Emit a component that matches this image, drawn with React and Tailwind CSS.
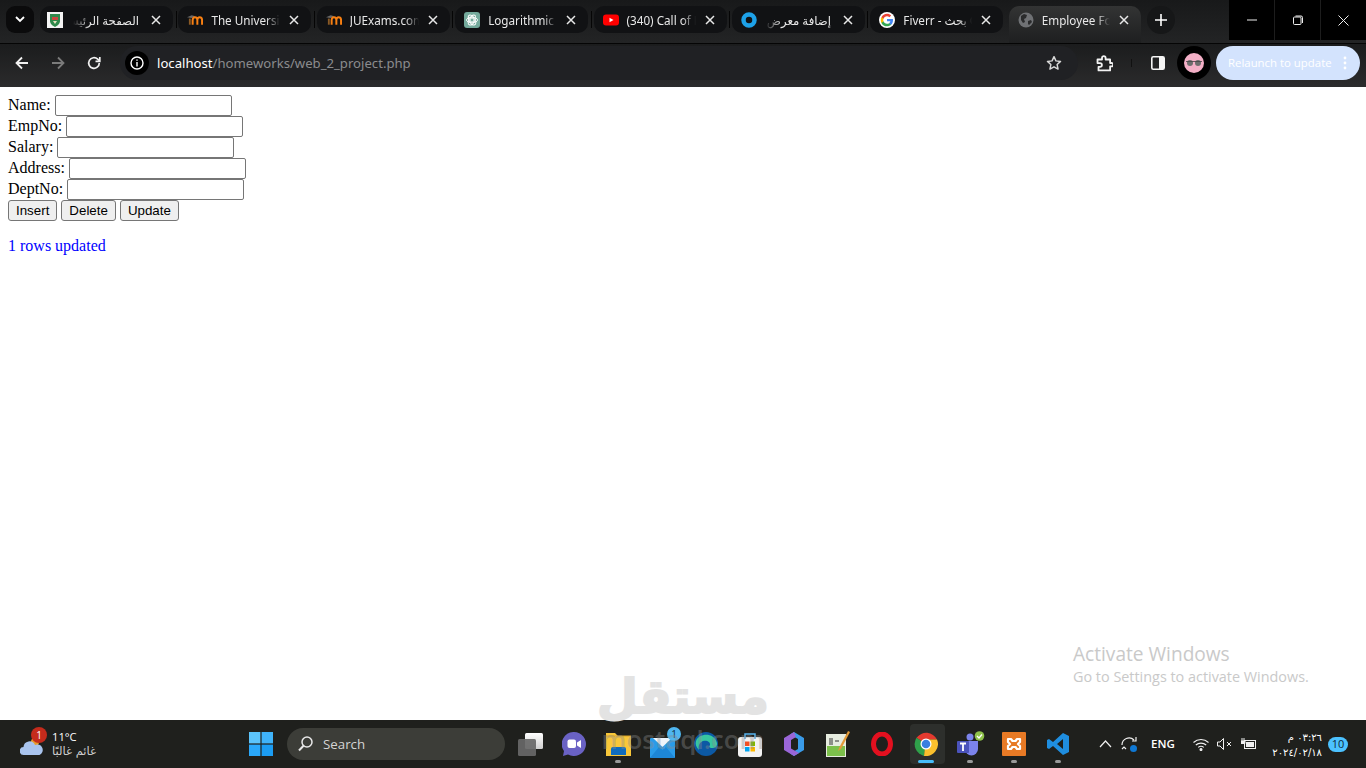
import React from "react";

const Close = ({ c = "#e8e8e8" }) => (
  <svg width="10" height="10" viewBox="0 0 10 10" fill="none" stroke={c} strokeWidth="1.5"><path d="M1 1l8 8M9 1l-8 8" /></svg>
);

const Moodle = () => (
  <svg width="17" height="16" viewBox="0 0 17 16">
    <path d="M0 5l5-2 4 1-4 2z" fill="#6a6a6a" />
    <path d="M2 6.500h2V13H2z" fill="#8a5a25" />
    <path d="M6 13V8c0-2 1-3 2.500-3S11 6 11 8v5M11 8c0-2 1-3 2.500-3S16 6 16 8v5" fill="none" stroke="#f98012" strokeWidth="2.100" />
  </svg>
);
const JuLogo = () => (
  <svg width="16" height="16" viewBox="0 0 16 16" className="-translate-x-[2px]"><rect width="16" height="16" fill="#f4f4f4" /><path d="M3 2h10v7c0 3-3 5-5 6-2-1-5-3-5-6z" fill="#2f8a4c" /><path d="M5 5h6v3H5z" fill="#c8473f" /><path d="M6 9h4l-2 3z" fill="#e8e2c0" /></svg>
);
const Gpt = () => (
  <svg width="16" height="16" viewBox="0 0 16 16"><rect width="16" height="16" rx="3" fill="#74aa9c" /><g fill="none" stroke="#fff" strokeWidth="0.9"><circle cx="8" cy="8" r="2" /><ellipse cx="8" cy="8" rx="5.500" ry="2.800" /><ellipse cx="8" cy="8" rx="5.500" ry="2.800" transform="rotate(60 8 8)" /><ellipse cx="8" cy="8" rx="5.500" ry="2.800" transform="rotate(120 8 8)" /></g></svg>
);
const Yt = () => (
  <svg width="16" height="16" viewBox="0 0 16 16"><rect y="2.500" width="16" height="11" rx="3" fill="#f00" /><path d="M6.500 5.700L10.500 8l-4 2.300z" fill="#fff" /></svg>
);
const Ring = () => (
  <svg width="16" height="16" viewBox="0 0 16 16"><circle cx="8" cy="8" r="5.500" fill="none" stroke="#1da1e8" strokeWidth="4.500" /></svg>
);
const GoogleG = () => (
  <svg width="16" height="16" viewBox="0 0 48 48">
    <circle cx="24" cy="24" r="24" fill="#fff" />
    <path fill="#4285F4" d="M42 24.500c0-1.300-.1-2.500-.3-3.700H24v7h10.100c-.4 2.300-1.800 4.300-3.700 5.600v4.700h6c3.500-3.200 5.600-8 5.600-13.600z" />
    <path fill="#34A853" d="M24 43c5 0 9.300-1.700 12.400-4.500l-6-4.700c-1.700 1.100-3.800 1.800-6.400 1.800-4.900 0-9-3.300-10.500-7.700H7.300v4.800C10.400 38.800 16.700 43 24 43z" />
    <path fill="#FBBC05" d="M13.500 27.900c-.4-1.100-.6-2.400-.6-3.700s.2-2.600.6-3.700v-4.800H7.300C6 18.200 5.300 21 5.300 24.200s.7 6 2 8.500z" />
    <path fill="#EA4335" d="M24 12.700c2.800 0 5.200 1 7.200 2.800l5.300-5.300C33.300 7.200 29 5.400 24 5.400c-7.300 0-13.600 4.200-16.700 10.300l6.200 4.800c1.500-4.500 5.600-7.800 10.500-7.800z" />
  </svg>
);
const Globe = () => (
  <svg width="16" height="16" viewBox="0 0 16 16"><circle cx="8" cy="8" r="7.500" fill="#6f7174" /><path d="M3 4l3-2 3 1-1 3-2 1 1 3-2 1-2-3zM10 9l3-1 1 2-3 3-1-1z" fill="#2a2b2c" /></svg>
);

const tabs = [
  { icon: <JuLogo />, text: "الصفحة الرئيسية", rtl: true },
  { icon: <Moodle />, text: "The University of Jordan" },
  { icon: <Moodle />, text: "JUExams.com" },
  { icon: <Gpt />, text: "Logarithmic Functions" },
  { icon: <Yt />, text: "(340) Call of Duty" },
  { icon: <Ring />, text: "إضافة معرض أعمال", rtl: true },
  { icon: <GoogleG />, text: "Fiverr - بحث Google" },
];

const Tab = ({ icon, text, rtl, last }) => (
  <div className="w-[138.400px] shrink-0 h-[27px] flex items-center">
    <div className="w-[133px] h-[27px] rounded-[10px] bg-[#111214] flex items-center pl-[9px] pr-[12px] gap-[8px]">
      <span className="w-[16px] h-[16px] shrink-0 flex items-center justify-center mt-[1px]">{icon}</span>
      <span
        dir={rtl ? "rtl" : "ltr"}
        className={`flex-1 overflow-hidden whitespace-nowrap text-[11.700px] pt-[2px] text-[#e8e8e8] ${rtl ? "mr-[3px] [mask-image:linear-gradient(to_left,black_75%,transparent)]" : "[mask-image:linear-gradient(to_right,black_80%,transparent)]"}`}
      >
        {text}
      </span>
      <span className="w-[10px] shrink-0 ml-[1px] flex"><Close /></span>
    </div>
    {!last && <div className="w-[1px] h-[17px] bg-[#050505] ml-[2.500px]" />}
  </div>
);

const TabStrip = () => (
  <div className="h-[44px] flex bg-gradient-to-b from-[#18191a] to-[#232425] border-b border-[#050505] relative">
    <div className="flex items-start pt-[6px] pl-[6px]">
      <div className="w-[28px] h-[27px] rounded-[9px] bg-[#0b0b0c] flex items-center justify-center mr-[6px]">
        <svg width="10" height="7" viewBox="0 0 10 7" fill="none" stroke="#fff" strokeWidth="1.800"><path d="M1 1l4 4 4-4" /></svg>
      </div>
      {tabs.map((t, i) => <Tab key={i} {...t} last={i === 6} />)}
      <div className="w-[132px] h-[37px] rounded-t-[10px] bg-gradient-to-b from-[#333434] to-[#1e1f20] flex items-center self-start pl-[9px] pr-[12px] gap-[8px] pb-[9px]">
        <span className="w-[16px] h-[16px] shrink-0"><Globe /></span>
        <span className="flex-1 overflow-hidden whitespace-nowrap text-[11.700px] pt-[2px] text-[#e8e8e8] [mask-image:linear-gradient(to_right,black_80%,transparent)]">Employee Form</span>
        <span className="w-[10px] shrink-0 ml-[1px] flex"><Close /></span>
      </div>
      <div className="w-[28px] h-[28px] rounded-full bg-[#161718] ml-[6px] flex items-center justify-center">
        <svg width="12" height="12" viewBox="0 0 12 12" stroke="#fff" strokeWidth="1.600"><path d="M6 0v12M0 6h12" /></svg>
      </div>
    </div>
    <div className="ml-auto w-[137px] h-[40px] bg-black flex">
      <div className="w-[46px] flex items-center justify-center border-r border-[#1d1d1d]">
        <svg width="10" height="10" viewBox="0 0 10 10" stroke="#eee"><path d="M0 5h10" /></svg>
      </div>
      <div className="w-[46px] flex items-center justify-center border-r border-[#1d1d1d]">
        <svg width="10" height="10" viewBox="0 0 10 10" fill="none" stroke="#eee"><rect x="0.500" y="2" width="7.500" height="7.500" rx="1" /><path d="M2.500 1h5.500a1.500 1.500 0 0 1 1.500 1.500V8" /></svg>
      </div>
      <div className="w-[45px] flex items-center justify-center">
        <svg width="11" height="11" viewBox="0 0 11 11" stroke="#eee"><path d="M.5.500l10 10M10.500.500l-10 10" /></svg>
      </div>
    </div>
  </div>
);

const Toolbar = () => (
  <div className="h-[43px] flex items-start pt-[2px] bg-gradient-to-b from-[#1b1c1d] to-[#2b2b2c] font-['Open_Sans',sans-serif]">
    <div className="w-[120px] h-[34px] flex items-center shrink-0">
      <span className="w-[44px] flex justify-center">
        <svg width="14" height="14" viewBox="0 0 14 14" fill="none" stroke="#f1f1f1" strokeWidth="1.800"><path d="M13 7H2M7 1.500L1.500 7 7 12.500" /></svg>
      </span>
      <span className="w-[28px] flex justify-center">
        <svg width="14" height="14" viewBox="0 0 14 14" fill="none" stroke="#7b7b7b" strokeWidth="1.800"><path d="M1 7h11M7 1.500L12.500 7 7 12.500" /></svg>
      </span>
      <span className="w-[44px] flex justify-center">
        <svg width="14" height="14" viewBox="0 0 14 14" fill="none" stroke="#f1f1f1" strokeWidth="1.700"><path d="M12.300 7A5.300 5.300 0 1 1 10.700 3.200L12.500 5" /><path d="M12.800 1v4.300H8.500" /></svg>
      </span>
    </div>
    <div className="w-[958px] h-[34px] rounded-full bg-[#202124] flex items-center pl-[5px] pr-[16px] shrink-0">
      <span className="w-[24px] h-[24px] rounded-full bg-black flex items-center justify-center mr-[8px]">
        <svg width="14" height="14" viewBox="0 0 14 14" fill="none" stroke="#fff" strokeWidth="1.400"><circle cx="7" cy="7" r="6" /><path d="M7 6v4.500M7 3.400v1.400" /></svg>
      </span>
      <span className="text-[13.150px] pt-[2px] whitespace-nowrap font-['Noto_Sans',sans-serif] text-white">localhost<span className="text-[#8b8c8e]">/homeworks/web_2_project.php</span></span>
      <span className="ml-auto flex">
        <svg width="16" height="16" viewBox="0 0 24 24" fill="none" stroke="#d8d8d8" strokeWidth="2.200" strokeLinejoin="round"><path d="M12 2.500l2.900 6.300 6.900.8-5.100 4.700 1.400 6.800-6.100-3.400-6.100 3.400 1.400-6.800L2.200 9.600l6.900-.8z" /></svg>
      </span>
    </div>
    <div className="flex items-center h-[34px] shrink-0">
      <span className="w-[53px] flex justify-center">
        <svg width="17" height="17" viewBox="0 0 17 17" fill="none" stroke="#f2f2f2" strokeWidth="1.800" strokeLinejoin="round"><path d="M1.500 4.500H6V3a1.800 1.800 0 0 1 3.600 0v1.500h4.500v3.500H15.500a1.700 1.700 0 0 1 0 3.400h-1.400v4H2.500v-3.500H4a1.900 1.900 0 0 0 0-3.800H1.500z" /></svg>
      </span>
      <span className="w-[1px] h-[8px] bg-[#111]" />
      <span className="w-[18px] ml-[17px] mr-[10px] flex justify-center">
        <svg width="14" height="14" viewBox="0 0 14 14"><rect x="0.800" y="0.800" width="12.400" height="12.400" rx="1.500" fill="none" stroke="#f5f5f5" strokeWidth="1.600" /><rect x="8" y="1" width="5" height="12" fill="#f5f5f5" /></svg>
      </span>
      <span className="w-[34px] h-[34px] rounded-full bg-black flex items-center justify-center">
        <svg width="20" height="20" viewBox="0 0 20 20"><circle cx="10" cy="10" r="10" fill="#f3afc6" /><circle cx="6" cy="10" r="3" fill="#6d6d6d" /><circle cx="14" cy="10" r="3" fill="#6d6d6d" /><path d="M2 8.500h16" stroke="#444" strokeWidth="0.800" /></svg>
      </span>
      <span className="w-[144px] h-[34px] ml-[5px] rounded-full bg-[#d3e3fd] flex items-center pl-[12px] pr-[13px] text-[11.400px] text-white whitespace-nowrap">
        Relaunch to update
        <svg className="ml-auto" width="4" height="14" viewBox="0 0 4 14" fill="#fff"><circle cx="2" cy="2" r="1.400" /><circle cx="2" cy="7" r="1.400" /><circle cx="2" cy="12" r="1.400" /></svg>
      </span>
    </div>
  </div>
);

const Row = ({ label }) => (
  <div className="flex items-center h-[21px] gap-[4px]">
    <span className="pb-[2px]">{label}</span>
    <input className="w-[177px] h-[21px] border border-[#767676] rounded-[2px] bg-white" />
  </div>
);

const Btn = ({ children }) => (
  <button className="h-[21px] px-[7px] bg-[#efefef] border border-[#767676] rounded-[3px] text-[13.333px] text-black font-['Liberation_Sans',sans-serif]">{children}</button>
);

const Page = () => (
  <div className="flex-1 bg-white pt-[8px] pl-[8px] font-['Liberation_Serif',serif] text-[16px] text-black relative">
    <Row label="Name:" />
    <Row label="EmpNo:" />
    <Row label="Salary:" />
    <Row label="Address:" />
    <Row label="DeptNo:" />
    <div className="flex gap-[4px] h-[21px]"><Btn>Insert</Btn><Btn>Delete</Btn><Btn>Update</Btn></div>
    <p className="mt-[16px] text-[#0000ff] leading-[18px]">1 rows updated</p>
    <div className="absolute left-[1073px] top-[558px] text-[#c9c9c9] font-['Open_Sans',sans-serif] leading-none">
      <div className="text-[19.100px] mb-[6px]">Activate Windows</div>
      <div className="text-[14.400px]">Go to Settings to activate Windows.</div>
    </div>
  </div>
);

const Slot = ({ children, dot }) => (
  <div className="w-[44px] h-[48px] relative flex items-center justify-center shrink-0">
    {children}
    {dot && <span className="absolute bottom-[5px] left-[19px] w-[6px] h-[3px] rounded-full bg-[#9a9a9a]" />}
  </div>
);

const Taskbar = () => (
  <div className="h-[48px] bg-[#1f201d] flex items-center text-white font-['Open_Sans',sans-serif] relative">
    <div className="w-[239px] shrink-0 flex items-center pl-[20px] relative h-full">
      <svg width="24" height="18" viewBox="0 0 24 18" className="mt-[5px]">
        <circle cx="15" cy="4" r="4" fill="#e89a2c" />
        <path d="M4 17a4 4 0 0 1-.5-8A6 6 0 0 1 15 7a4.500 4.500 0 0 1 4.500 10z" fill="#a9c4ee" />
      </svg>
      <span className="absolute left-[31px] top-[7px] w-[16px] h-[16px] rounded-full bg-[#c42b1c] text-[10px] flex items-center justify-center">1</span>
      <div className="ml-[8px] flex flex-col leading-none">
        <span className="text-[11.200px] mb-[4px]">11°C</span>
        <span dir="rtl" className="text-[11.500px] text-[#d0d0d0] font-['DejaVu_Sans',sans-serif]">غائم غالبًا</span>
      </div>
    </div>
    <Slot>
      <svg width="24" height="24" viewBox="0 0 24 24"><path d="M0 0h11.400v11.400H0z" fill="#5cc4fb" /><path d="M12.600 0H24v11.400H12.600z" fill="#3fb3fa" /><path d="M0 12.600h11.400V24H0z" fill="#2aa8fa" /><path d="M12.600 12.600H24V24H12.600z" fill="#1b9cf2" /></svg>
    </Slot>
    <div className="w-[218px] h-[32px] ml-[4px] mr-[3px] rounded-full bg-[#3c3d38] flex items-center pl-[11px] gap-[10px] shrink-0">
      <svg width="15" height="16" viewBox="0 0 15 16" fill="none" stroke="#e8e8e8" strokeWidth="1.500"><circle cx="9" cy="6" r="5" /><path d="M5.500 9.800L1 14.500" strokeWidth="2" /></svg>
      <span className="text-[13.300px] pt-[1px] text-[#d4d4d4]">Search</span>
    </div>
    <Slot>
      <svg width="25" height="23" viewBox="0 0 25 23"><defs><linearGradient id="tv" x1="0" y1="0" x2="0" y2="1"><stop offset="0" stopColor="#fff" /><stop offset="1" stopColor="#cfcfcf" /></linearGradient></defs><rect x="7" y="0" width="18" height="16" rx="1.500" fill="url(#tv)" /><rect x="0" y="6" width="18" height="17" rx="1.500" fill="#686868" fillOpacity="0.92" /></svg>
    </Slot>
    <Slot>
      <svg width="24" height="24" viewBox="0 0 24 24"><path d="M12 0a12 12 0 1 1-6 22.400L1 24l1-5A12 12 0 0 1 12 0z" fill="#6a62c4" /><rect x="5.500" y="7.500" width="8.500" height="8.500" rx="2" fill="#fff" /><path d="M15 10.500l4-2.500v8l-4-2.500z" fill="#fff" /></svg>
    </Slot>
    <Slot dot>
      <svg width="25" height="23" viewBox="0 0 25 23"><path d="M0 0h9l3 3h13v20H0z" fill="#f8c73a" /><path d="M0 3h25" stroke="#d9a226" /><path d="M5 22v-6a2 2 0 0 1 2-2h11a2 2 0 0 1 2 2v6z" fill="#0f6cbd" /></svg>
    </Slot>
    <Slot>
      <svg width="25" height="20" viewBox="0 0 25 20" className="mt-[7px]"><rect width="25" height="20" rx="1" fill="#2a9be8" /><path d="M3 0h19l-9.500 9z" fill="#eef4fb" /><path d="M0 20l9-11 3.500 3 3.500-3 9 11z" fill="#1d86d6" /></svg>
      <span className="absolute right-[3px] top-[7px] w-[14px] h-[14px] rounded-full bg-[#4fb6f0] text-[10px] text-[#10324a] flex items-center justify-center">1</span>
    </Slot>
    <Slot>
      <svg width="24" height="24" viewBox="0 0 24 24"><circle cx="12" cy="12" r="12" fill="#0c59a4" /><path d="M2 9C5 1 20 0 23 11c.6 3-2 5-5 5-3 0-3-2-2-3 .5-3-3-5-7-4-3 1-5 4-4 9C2 15 1 12 2 9z" fill="#37c6a0" /></svg>
    </Slot>
    <Slot>
      <svg width="24" height="25" viewBox="0 0 24 25"><rect y="5" width="24" height="20" rx="3" fill="#f3f3f3" /><path d="M7 7V2h10v5" fill="none" stroke="#59b4ee" strokeWidth="1.500" /><rect x="7" y="9.500" width="4.500" height="4.500" fill="#f25022" /><rect x="12.500" y="9.500" width="4.500" height="4.500" fill="#7fba00" /><rect x="7" y="15" width="4.500" height="4.500" fill="#00a4ef" /><rect x="12.500" y="15" width="4.500" height="4.500" fill="#ffb900" /></svg>
    </Slot>
    <Slot>
      <svg width="22" height="24" viewBox="0 0 22 24"><path d="M11 0l10 6v12l-10 6-4-2.500L15 17V7L7 2.500z" fill="#3a9be8" /><path d="M11 0L1 6v12l10 6 5-3-8-4.500V8l5-3z" fill="#9a66d8" /></svg>
    </Slot>
    <Slot>
      <svg width="24" height="26" viewBox="0 0 24 26"><rect y="3" width="20" height="23" fill="#e6ecdf" /><rect x="1" y="15" width="18" height="10" fill="#7cc04b" /><path d="M4 7v7M6 7v7M9 10h4" stroke="#333" strokeWidth="1" fill="none" /><path d="M22 0l2 1-9 17-3 2 1-3z" fill="#e39a38" /></svg>
    </Slot>
    <Slot>
      <svg width="22" height="24" viewBox="0 0 22 24"><ellipse cx="11" cy="12" rx="8.500" ry="10" fill="none" stroke="#e3101f" strokeWidth="5" /></svg>
    </Slot>
    <div className="w-[44px] h-[48px] relative flex items-center justify-center shrink-0">
      <div className="absolute left-[6px] top-[4px] w-[35px] h-[40px] rounded-[4px] bg-[#2d2f2c]" />
      <svg className="relative" width="24" height="24" viewBox="0 0 24 24">
        <path d="M12 12L2.500 5.800A12 12 0 0 1 23 7.500H12z" fill="#e53a2f" />
        <path d="M12 12l-9.500-6.200A12 12 0 0 0 10 23.900z" fill="#2fa04a" />
        <path d="M12 7.500h11A12 12 0 0 1 10 23.900z" fill="#fbc02d" />
        <circle cx="12" cy="12" r="5.500" fill="#fff" /><circle cx="12" cy="12" r="4.300" fill="#3a7fe0" />
      </svg>
      <span className="absolute bottom-[5px] left-[14px] w-[16px] h-[3px] rounded-full bg-[#47bdfa]" />
    </div>
    <Slot dot>
      <svg width="29" height="26" viewBox="0 0 29 26"><circle cx="14" cy="6" r="3.500" fill="#7b83eb" /><path d="M9 10h13v8a6 6 0 0 1-13 0z" fill="#7b83eb" /><rect x="1" y="10" width="12" height="12" rx="1" fill="#4b53bc" /><path d="M4 12.500h6M7 12.500V20" stroke="#fff" strokeWidth="1.800" fill="none" /><circle cx="23.500" cy="5" r="4.800" fill="#8fc24a" /><path d="M21 5l2 2 3-3.500" stroke="#fff" strokeWidth="1.300" fill="none" /></svg>
    </Slot>
    <Slot dot>
      <svg width="24" height="24" viewBox="0 0 24 24"><rect width="24" height="24" rx="1" fill="#e87a25" /><path d="M6 7h3l1.500 2h3L15 7h3v3l-2 2 2 2v3h-3l-1.500-2h-3L9 17H6v-3l2-2-2-2z" fill="none" stroke="#fff" strokeWidth="2.200" strokeLinejoin="round" /></svg>
    </Slot>
    <Slot dot>
      <svg width="24" height="24" viewBox="0 0 24 24"><path d="M17 1l6 3v16l-6 3L7 14l-4 3-2-1V8l2-1 4 3zM17 7l-6 5 6 5z" fill="#1f8ee0" /></svg>
    </Slot>
    <div className="ml-[8px] flex items-center h-full shrink-0">
      <span className="w-[34px] flex justify-center">
        <svg width="13" height="8" viewBox="0 0 13 8" fill="none" stroke="#f0f0f0" strokeWidth="1.200"><path d="M1 7l5.500-6L12 7" /></svg>
      </span>
      <span className="w-[14px] flex justify-center">
        <svg width="17" height="17" viewBox="0 0 17 17" fill="none" stroke="#f0f0f0" strokeWidth="1.200" className="shrink-0"><path d="M1 9a7 7 0 0 1 12-5M15 1v4h-4M1 13l2-2 2 2" /><circle cx="12.500" cy="12.500" r="3.500" fill="#0f78d4" stroke="none" /></svg>
      </span>
      <span className="w-[54px] text-center text-[11.500px] font-semibold">ENG</span>
      <span className="w-[24px] flex justify-center -ml-[1px]">
        <svg width="16" height="13" viewBox="0 0 16 13" fill="none" stroke="#f0f0f0" strokeWidth="1.100"><path d="M.5 4.500a11 11 0 0 1 15 0M2.800 7a8 8 0 0 1 10.400 0M5.200 9.400a4.500 4.500 0 0 1 5.600 0" /><circle cx="8" cy="11.500" r="1" fill="#f0f0f0" /></svg>
      </span>
      <span className="w-[24px] flex justify-center">
        <svg width="16" height="12" viewBox="0 0 16 12" fill="none" stroke="#f0f0f0" strokeWidth="1"><path d="M.5 4v4h2.500l3.500 3.500V.5L3 4zM10 4l4 4M14 4l-4 4" /></svg>
      </span>
      <span className="w-[24px] flex justify-center">
        <svg width="16" height="12" viewBox="0 0 16 12"><rect x="3.500" y="2.500" width="11" height="8" fill="none" stroke="#f0f0f0" /><rect x="5" y="4" width="8" height="5" fill="#f0f0f0" /><path d="M0 3h4v2.500H0zM1 0v3M3 0v3" stroke="#f0f0f0" fill="#f0f0f0" /></svg>
      </span>
      <div className="w-[61px] text-[10px] leading-[15px] pt-[1px] text-white font-['DejaVu_Sans',sans-serif] flex flex-col items-end">
        <span>٠٣:٢٦ م</span>
        <span>٢٠٢٤/٠٢/١٨</span>
      </div>
      <span className="ml-[6px] w-[20px] h-[15px] rounded-full bg-[#4cc2ff] text-[11px] text-[#0d2a3d] flex items-center justify-center">10</span>
    </div>
  </div>
);

const Watermark = () => (
  <div className="absolute left-[600px] top-[668px] w-[166px] h-[90px] pointer-events-none flex flex-col items-center">
    <span dir="rtl" className="text-[47px] leading-[58px] font-bold text-[#e3e3e3] [-webkit-text-stroke:2px_#e3e3e3] font-['DejaVu_Sans',sans-serif] whitespace-nowrap">مستقل</span>
    <span className="text-[26px] leading-[26px] font-semibold text-[#8c8c8c]/40 font-['Open_Sans',sans-serif] whitespace-nowrap">mostaql.com</span>
  </div>
);

export default function App() {
  return (
    <div className="w-[1366px] h-[768px] flex flex-col overflow-hidden relative font-['Noto_Sans','DejaVu_Sans',sans-serif]">
      <TabStrip />
      <Toolbar />
      <Page />
      <Taskbar />
      <Watermark />
    </div>
  );
}
